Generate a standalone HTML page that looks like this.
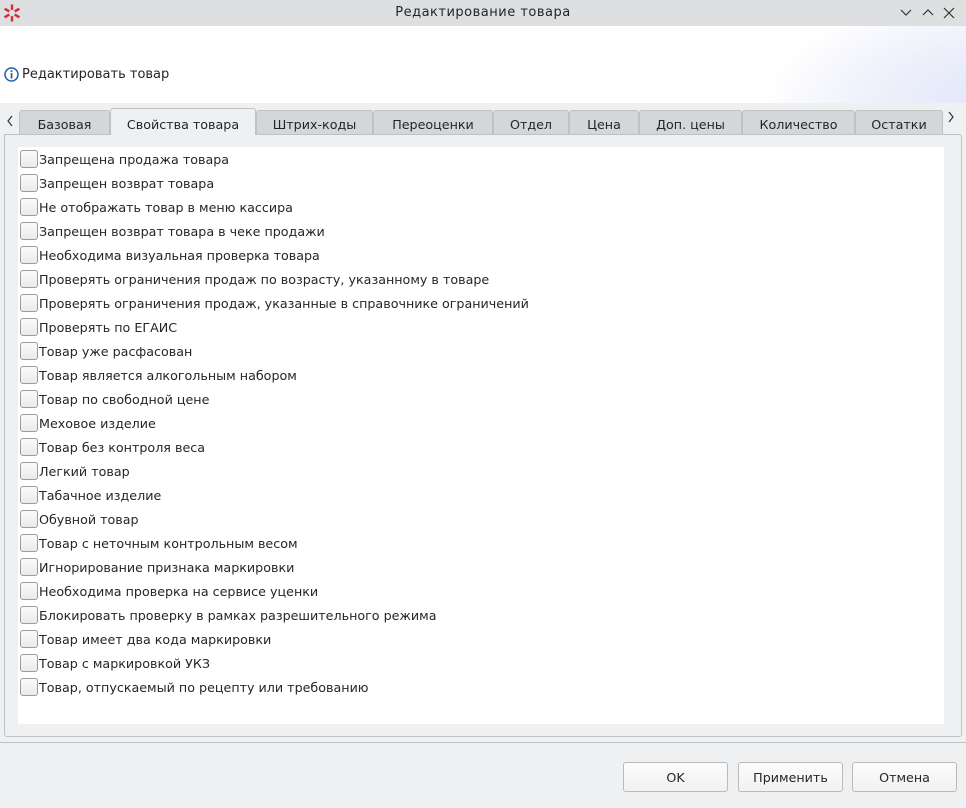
<!DOCTYPE html>
<html><head><meta charset="utf-8"><style>
*{margin:0;padding:0;box-sizing:border-box}
body{width:966px;height:808px;background:#eff0f1;font-family:"DejaVu Sans","Liberation Sans",sans-serif;font-size:12.7px;color:#232629;position:relative;overflow:hidden}
.abs{position:absolute}
.title{left:0;top:0;width:966px;height:26px;background:#dedfe0;text-align:center;line-height:26px;font-size:13px;letter-spacing:0.5px}
.head{left:0;top:26px;width:966px;height:77px;background:#fff;overflow:hidden}
.tab{position:absolute;top:110px;height:24px;background:#d5d6d8;border:1px solid #c0c1c3;border-bottom:none;border-radius:3px 3px 0 0;text-align:center;line-height:28px;font-size:12.7px}
.sel{top:108px;height:27px;background:#eff0f1;line-height:31px}
.pane{left:4px;top:134px;width:958px;height:603px;border:1px solid #c0c1c3;border-radius:0 3px 3px 3px}
.white{left:18px;top:147px;width:926px;height:577px;background:#fff}
.row{position:absolute;left:20px;height:18px;line-height:19px;white-space:nowrap}
.cb{display:inline-block;width:18px;height:18px;border:1px solid #9a9b9d;border-radius:3px;background:linear-gradient(#fbfbfb,#eaeaea);vertical-align:top;margin-right:1px}
.btn{position:absolute;top:762px;width:105px;height:30px;border:1px solid #b9babc;border-radius:3px;background:linear-gradient(#fcfcfc,#f1f1f2);text-align:center;line-height:29px;font-size:12.7px}
</style></head><body>
<div class="abs title">Редактирование товара</div>
<svg class="abs" style="left:2px;top:3px" width="20" height="20" viewBox="0 0 20 20"><g stroke="#d42b3a" stroke-width="2.4" fill="none"><path d="M10 1.5v17M2.6 5.7l14.8 8.6M2.6 14.3l14.8-8.6"/></g><circle cx="10" cy="10" r="3.2" fill="#dedfe0"/></svg>
<svg class="abs" style="left:898px;top:6px" width="62" height="14" viewBox="0 0 62 14"><g stroke="#333" stroke-width="1.2" fill="none"><path d="M3 4l5 5 5-5M25 9l5-5 5 5M46 2l10 10M56 2L46 12"/></g></svg>
<div class="abs head"><div class="abs" style="left:760px;top:-40px;width:320px;height:200px;border-radius:50%;background:radial-gradient(ellipse at 80% 60%,#dfe4f7 0%,#eef0fb 40%,#fff 70%)"></div></div>
<svg class="abs" style="left:4px;top:67px" width="15" height="15" viewBox="0 0 15 15"><circle cx="7.5" cy="7.5" r="6.5" fill="none" stroke="#1d5fa8" stroke-width="1.5"/><rect x="6.7" y="6" width="1.7" height="5.5" fill="#1d5fa8"/><rect x="6.7" y="3.3" width="1.7" height="1.7" fill="#1d5fa8"/></svg>
<div class="abs" style="left:22px;top:67px;font-size:13px">Редактировать товар</div>
<svg class="abs" style="left:5px;top:114px" width="10" height="14" viewBox="0 0 10 14"><path d="M7 2L3 7l4 5" stroke="#333" stroke-width="1.2" fill="none"/></svg>
<svg class="abs" style="left:946px;top:110px" width="10" height="14" viewBox="0 0 10 14"><path d="M3 2l4 5-4 5" stroke="#333" stroke-width="1.2" fill="none"/></svg>
<div class="abs pane"></div>
<div class="tab" style="left:19px;width:91px">Базовая</div>
<div class="tab" style="left:256px;width:117px">Штрих-коды</div>
<div class="tab" style="left:373px;width:120px">Переоценки</div>
<div class="tab" style="left:493px;width:76px">Отдел</div>
<div class="tab" style="left:569px;width:70px">Цена</div>
<div class="tab" style="left:639px;width:103px">Доп. цены</div>
<div class="tab" style="left:742px;width:113px">Количество</div>
<div class="tab" style="left:855px;width:88px">Остатки</div>
<div class="tab sel" style="left:110px;width:146px">Свойства товара</div>
<div class="abs white"></div>
<div class="row" style="top:150px"><span class="cb"></span>Запрещена продажа товара</div>
<div class="row" style="top:174px"><span class="cb"></span>Запрещен возврат товара</div>
<div class="row" style="top:198px"><span class="cb"></span>Не отображать товар в меню кассира</div>
<div class="row" style="top:222px"><span class="cb"></span>Запрещен возврат товара в чеке продажи</div>
<div class="row" style="top:246px"><span class="cb"></span>Необходима визуальная проверка товара</div>
<div class="row" style="top:270px"><span class="cb"></span>Проверять ограничения продаж по возрасту, указанному в товаре</div>
<div class="row" style="top:294px"><span class="cb"></span>Проверять ограничения продаж, указанные в справочнике ограничений</div>
<div class="row" style="top:318px"><span class="cb"></span>Проверять по ЕГАИС</div>
<div class="row" style="top:342px"><span class="cb"></span>Товар уже расфасован</div>
<div class="row" style="top:366px"><span class="cb"></span>Товар является алкогольным набором</div>
<div class="row" style="top:390px"><span class="cb"></span>Товар по свободной цене</div>
<div class="row" style="top:414px"><span class="cb"></span>Меховое изделие</div>
<div class="row" style="top:438px"><span class="cb"></span>Товар без контроля веса</div>
<div class="row" style="top:462px"><span class="cb"></span>Легкий товар</div>
<div class="row" style="top:486px"><span class="cb"></span>Табачное изделие</div>
<div class="row" style="top:510px"><span class="cb"></span>Обувной товар</div>
<div class="row" style="top:534px"><span class="cb"></span>Товар с неточным контрольным весом</div>
<div class="row" style="top:558px"><span class="cb"></span>Игнорирование признака маркировки</div>
<div class="row" style="top:582px"><span class="cb"></span>Необходима проверка на сервисе уценки</div>
<div class="row" style="top:606px"><span class="cb"></span>Блокировать проверку в рамках разрешительного режима</div>
<div class="row" style="top:630px"><span class="cb"></span>Товар имеет два кода маркировки</div>
<div class="row" style="top:654px"><span class="cb"></span>Товар с маркировкой УКЗ</div>
<div class="row" style="top:678px"><span class="cb"></span>Товар, отпускаемый по рецепту или требованию</div>
<div class="abs" style="left:0;top:742px;width:966px;height:1px;background:#bfc0c2"></div>
<div class="btn" style="left:623px">OK</div>
<div class="btn" style="left:738px">Применить</div>
<div class="btn" style="left:852px">Отмена</div>
</body></html>
